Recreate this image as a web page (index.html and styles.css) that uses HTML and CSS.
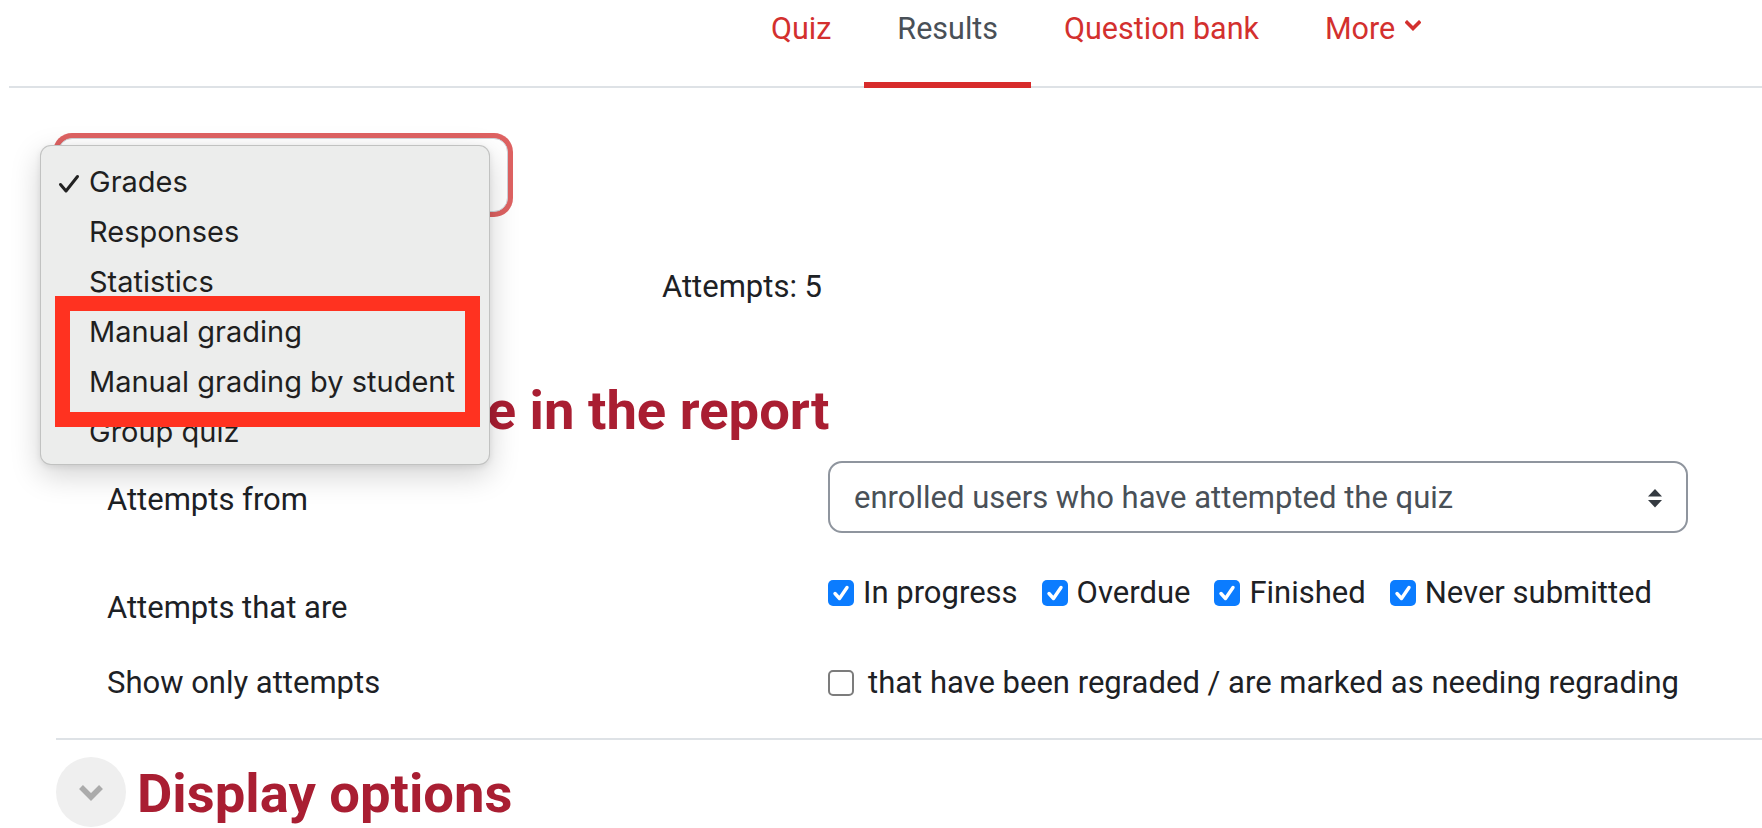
FILE: index.html
```html
<!DOCTYPE html>
<html lang="en">
<head>
<meta charset="utf-8">
<title>Quiz results</title>
<link rel="stylesheet" href="styles.css">
</head>
<body>
<nav class="secnav">
  <ul class="navlist">
    <li><a class="navlink">Quiz</a></li>
    <li><a class="navlink active">Results</a></li>
    <li><a class="navlink">Question bank</a></li>
    <li><a class="navlink">More<svg class="more-chev" width="16" height="11" viewBox="0 0 16 11"><polyline points="2,2.5 8,8.5 14,2.5" fill="none" stroke="#d3302e" stroke-width="3.6" stroke-linecap="square"/></svg></a></li>
  </ul>
</nav>

<main class="page">
  <div class="tertiary">
    <div class="reportselect"></div>
  </div>
  <div class="attempts">Attempts: 5</div>

  <form class="mform">
    <section class="fieldset">
      <div class="fhead">
        <span class="colicon"><svg width="28" height="18" viewBox="0 0 28 18"><polyline points="4,4 14,14 24,4" fill="none" stroke="#ababab" stroke-width="5.5"/></svg></span>
        <h3 class="ftitle">What to include in the report</h3>
      </div>

      <div class="frow row1">
        <div class="flabel">Attempts from</div>
        <div class="fval">
          <div class="select">
            <span>enrolled users who have attempted the quiz</span>
            <svg class="sel-arrows" width="16" height="20" viewBox="0 0 16 20"><polygon points="1,8.5 8,1 15,8.5" fill="#343a40"/><polygon points="1,12 15,12 8,19.5" fill="#343a40"/></svg>
          </div>
        </div>
      </div>

      <div class="frow row2">
        <div class="flabel">Attempts that are</div>
        <div class="fval checks">
          <label class="cb"><span class="box on"><svg width="26" height="26" viewBox="0 0 26 26"><polyline points="7,13.5 11.5,18.5 19,7.5" fill="none" stroke="#fff" stroke-width="3.4" stroke-linecap="round" stroke-linejoin="round"/></svg></span>In progress</label>
          <label class="cb"><span class="box on"><svg width="26" height="26" viewBox="0 0 26 26"><polyline points="7,13.5 11.5,18.5 19,7.5" fill="none" stroke="#fff" stroke-width="3.4" stroke-linecap="round" stroke-linejoin="round"/></svg></span>Overdue</label>
          <label class="cb"><span class="box on"><svg width="26" height="26" viewBox="0 0 26 26"><polyline points="7,13.5 11.5,18.5 19,7.5" fill="none" stroke="#fff" stroke-width="3.4" stroke-linecap="round" stroke-linejoin="round"/></svg></span>Finished</label>
          <label class="cb"><span class="box on"><svg width="26" height="26" viewBox="0 0 26 26"><polyline points="7,13.5 11.5,18.5 19,7.5" fill="none" stroke="#fff" stroke-width="3.4" stroke-linecap="round" stroke-linejoin="round"/></svg></span>Never submitted</label>
        </div>
      </div>

      <div class="frow row3">
        <div class="flabel">Show only attempts</div>
        <div class="fval">
          <label class="cb wide"><span class="box off"></span>that have been regraded / are marked as needing regrading</label>
        </div>
      </div>
    </section>

    <hr class="sep">

    <section class="fieldset">
      <div class="fhead lower">
        <span class="colicon"><svg width="28" height="18" viewBox="0 0 28 18"><polyline points="4,4 14,14 24,4" fill="none" stroke="#ababab" stroke-width="5.5"/></svg></span>
        <h3 class="ftitle">Display options</h3>
      </div>
    </section>
  </form>
</main>

<div class="menu">
  <div class="mitem"><svg class="tick" width="22" height="20" viewBox="0 0 22 20"><polyline points="2.5,10.5 8,17 19.5,2.5" fill="none" stroke="#222" stroke-width="3" stroke-linecap="round" stroke-linejoin="round"/></svg>Grades</div>
  <div class="mitem">Responses</div>
  <div class="mitem">Statistics</div>
  <div class="mitem">Manual grading</div>
  <div class="mitem">Manual grading by student</div>
  <div class="mitem">Group quiz</div>
</div>
<div class="annot"></div>
</body>
</html>
```

FILE: styles.css
```css
* { box-sizing: border-box; }

html, body {
  margin: 0;
  padding: 0;
  background: #fff;
}

body {
  font-family: Roboto, "Liberation Sans", sans-serif;
  font-size: 31px;
  line-height: 45px;
  color: #1d2125;
  width: 1762px;
  height: 828px;
  overflow: hidden;
  position: relative;
}

/* secondary navigation */
.secnav {
  margin-left: 9px;
  border-bottom: 2px solid #dee2e6;
}

.navlist {
  list-style: none;
  margin: 0;
  padding: 0 0 0 729px;
  display: flex;
}

.navlink {
  display: flex;
  align-items: center;
  padding: 6px 33px 31px;
  height: 88px;
  margin-bottom: -2px;
  font-size: 30.5px;
  color: #d3302e;
  border-bottom: 6px solid transparent;
  white-space: nowrap;
}

.navlink.active {
  color: #495057;
  border-bottom-color: #d72b2b;
}

.more-chev {
  margin-left: 10px;
  margin-top: -6px;
}

/* page */
.page {
  padding-left: 56px;
}

.tertiary {
  padding-top: 50px;
  display: flex;
}

.reportselect {
  margin-left: 2px;
  width: 450px;
  height: 74px;
  border: 1px solid #ced4da;
  border-radius: 14px;
  box-shadow: 0 0 0 5px #de6262;
  background: #fff;
}

.attempts {
  margin-top: 52px;
  padding-left: 606px;
}

.mform {
  margin: 0;
}

.fhead {
  display: flex;
  align-items: center;
  gap: 11px;
  margin-top: 67px;
}

.fhead.lower {
  margin-top: 16px;
}

.colicon {
  width: 70px;
  height: 70px;
  border-radius: 50%;
  background: #efefef;
  display: flex;
  align-items: center;
  justify-content: center;
  flex: none;
}

.ftitle {
  margin: 0;
  font-size: 54.4px;
  line-height: 66px;
  font-weight: 700;
  color: #a91e32;
  white-space: nowrap;
}

.fhead.lower .ftitle {
  padding-top: 5px;
}

/* form rows */
.frow {
  display: grid;
  grid-template-columns: 772px 860px;
}

.flabel {
  padding-left: 51px;
}

.row1 {
  margin-top: 15px;
  align-items: center;
}

.row1 .flabel {
  padding-top: 4px;
}

.row2 {
  margin-top: 37px;
  align-items: start;
}

.row2 .flabel {
  padding-top: 15px;
}

.row3 {
  margin-top: 30px;
  align-items: center;
}

.select {
  height: 72px;
  border: 2px solid #8f959e;
  border-radius: 14px;
  display: flex;
  align-items: center;
  justify-content: space-between;
  padding: 0 23px 0 24px;
  color: #495057;
}

.sel-arrows {
  margin-top: 1px;
}

.checks {
  display: flex;
}

.cb {
  display: flex;
  align-items: center;
  margin-right: 24px;
  white-space: nowrap;
}

.box {
  width: 26px;
  height: 26px;
  border-radius: 5px;
  margin-right: 9px;
  flex: none;
  display: flex;
}

.box.on {
  background: #0b7cff;
}

.box.off {
  border: 2px solid #7c7c7c;
  background: #fff;
  margin-right: 14px;
}

.sep {
  margin: 33px 0 0;
  border: 0;
  border-top: 2px solid #dee2e6;
}

/* dropdown overlay (native select popup) */
.menu {
  position: absolute;
  left: 40px;
  top: 145px;
  width: 450px;
  height: 320px;
  background: #ecedec;
  border: 1px solid rgba(0, 0, 0, 0.18);
  border-radius: 11px;
  box-shadow: 0 10px 30px rgba(0, 0, 0, 0.18), 0 2px 6px rgba(0, 0, 0, 0.08);
  padding-top: 11px;
  font-family: Inter, "Liberation Sans", sans-serif;
  font-size: 29px;
  color: #1f1f1f;
}

.mitem {
  height: 50px;
  line-height: 50px;
  padding-left: 48px;
  position: relative;
  white-space: nowrap;
}

.tick {
  position: absolute;
  left: 17px;
  top: 17px;
}

.annot {
  position: absolute;
  left: 55px;
  top: 296px;
  width: 425px;
  height: 131px;
  border: 15px solid #ff3220;
}
```
